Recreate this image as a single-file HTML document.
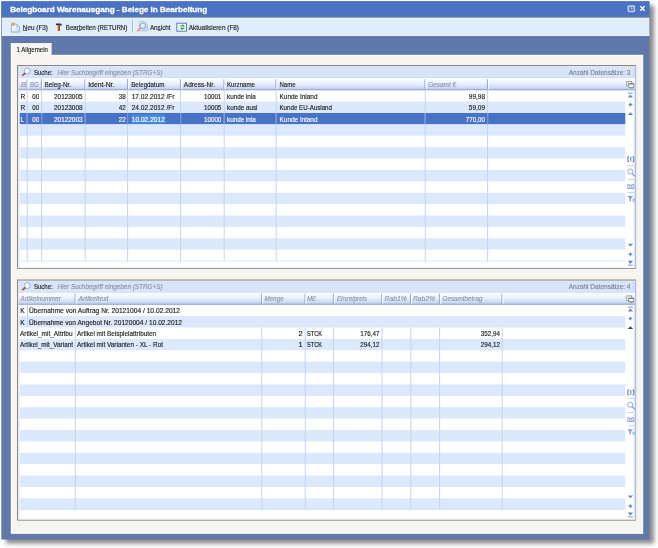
<!DOCTYPE html>
<html><head><meta charset="utf-8"><title>Belegboard Warenausgang</title>
<style>
html,body{margin:0;padding:0;background:#ffffff;}
body{width:658px;height:548px;overflow:hidden;position:relative;font-family:"Liberation Sans", sans-serif;}
</style></head><body>
<svg width="658" height="548" viewBox="0 0 658 548" style="position:absolute;left:0;top:0;will-change:transform">
<defs>
<linearGradient id="hg" x1="0" y1="0" x2="0" y2="1">
<stop offset="0" stop-color="#ffffff"/><stop offset="0.4" stop-color="#ecf2fc"/><stop offset="0.75" stop-color="#d2def4"/><stop offset="1" stop-color="#aec3e8"/>
</linearGradient>
<linearGradient id="pg" x1="0" y1="0" x2="1" y2="1"><stop offset="0" stop-color="#ffffff"/><stop offset="1" stop-color="#c8daf4"/></linearGradient>
<filter id="sh" x="-5%" y="-5%" width="112%" height="112%"><feGaussianBlur stdDeviation="2"/></filter>
</defs>
<style>
text{font-family:"Liberation Sans",sans-serif;font-size:7.4px;fill:#1a1a1a;stroke:#1a1a1a;stroke-width:0.15px}
.c{font-size:7.4px}
.hd{font-size:7.4px;fill:#222}
.gi{fill:#8e97a8;stroke:#8e97a8;font-style:italic}
.it{fill:#8b93a3;stroke:#8b93a3;font-style:italic}
.gr{fill:#7b8494;stroke:#7b8494}
.w{fill:#ffffff;stroke:#ffffff}
.tt{font-size:7.6px;font-weight:bold;fill:#ffffff;stroke:#ffffff;stroke-width:0.3px}
.tb{font-size:7.4px;fill:#1c1c1c}
</style>
<rect x="6" y="5.5" width="648" height="538" fill="#2a2a2a" opacity="0.55" filter="url(#sh)"/><rect x="1.3" y="1.3" width="648.1" height="538.2" fill="#6079aa"/><rect x="1.3" y="1.3" width="648.1" height="14.299999999999999" fill="#4a73c5"/><rect x="1.3" y="15.6" width="648.1" height="2.2" fill="#5975ad"/><text x="10.2" y="11.8" class="tt" text-anchor="start"  textLength="197" lengthAdjust="spacingAndGlyphs">Belegboard Warenausgang - Belege in Bearbeitung</text><rect x="627.5" y="5.3" width="7.6" height="7" rx="1.2" fill="#bccbf1"/><rect x="629" y="6.9" width="4.6" height="3.9" fill="#5c7ecb"/><rect x="630.6" y="7.6" width="1.6" height="0.8" fill="#c9d6f4"/><rect x="631.5" y="7.6" width="0.8" height="1.8" fill="#c9d6f4"/><path d="M640.4 6.3 L644.6 10.8 M644.6 6.3 L640.4 10.8" stroke="#ffffff" stroke-width="1.35"/><rect x="2" y="17.8" width="647.4" height="18.400000000000002" fill="#dfedfc"/><rect x="2" y="35.3" width="647.4" height="0.9" fill="#ebf4fe"/><rect x="2" y="36.2" width="647.4" height="0.9" fill="#5872a6"/><rect x="2" y="17.8" width="647.4" height="1" fill="#eef5fe"/><path d="M11.4 24 h5.2 l2.8 2.8 v5.3 h-8 z" fill="url(#pg)" stroke="#8fa4c8" stroke-width="0.8"/><path d="M16.6 24 v2.8 h2.8" fill="none" stroke="#9fb2d2" stroke-width="0.6"/><circle cx="13.1" cy="24.3" r="1.7" fill="#ee8f2c"/><circle cx="13.1" cy="24.3" r="0.7" fill="#fbd089"/><text x="22.8" y="29.8" class="tb" text-anchor="start"  textLength="25.2" lengthAdjust="spacingAndGlyphs">Neu (F3)</text><rect x="22.8" y="30.3" width="4.6" height="0.6" fill="#1c1c1c"/><path d="M57.7 25.4 h2.3 v5.6 h-2.3 z" fill="#d4641c"/><path d="M58.9 25.4 h1.1 v5.6 h-1.1 z" fill="#a8440e"/><path d="M55.9 23.6 h4.6 q1.4 0.3 1.4 2.2 h-1.1 q-0.1 -0.7 -0.8 -0.6 h-4.1 z" fill="#3b2a24"/><text x="65.8" y="29.8" class="tb" text-anchor="start"  textLength="61.6" lengthAdjust="spacingAndGlyphs">Bearbeiten (RETURN)</text><rect x="77.4" y="30.3" width="3.4" height="0.6" fill="#1c1c1c"/><rect x="132.1" y="19.8" width="0.9" height="12.6" fill="#a3b1cc"/><rect x="133" y="19.8" width="0.8" height="12.6" fill="#f4f9ff"/><path d="M139.4 21.6 h5.4 l2.8 2.8 v6.4 h-8.2 z" fill="url(#pg)" stroke="#9fb1d2" stroke-width="0.7"/><circle cx="142.9" cy="26" r="3" fill="#c9dcf4" stroke="#8c9cba" stroke-width="0.9"/><circle cx="142.4" cy="25.4" r="1.3" fill="#eaf2fd"/><path d="M140.6 28.2 L137.6 31" stroke="#dc9a84" stroke-width="1.6" stroke-linecap="round"/><text x="149.9" y="29.8" class="tb" text-anchor="start"  textLength="20.7" lengthAdjust="spacingAndGlyphs">Ansicht</text><rect x="157.8" y="30.3" width="3.2" height="0.6" fill="#1c1c1c"/><rect x="176.8" y="23.2" width="9.6" height="8" fill="#fbfdfb" stroke="#4d6db2" stroke-width="0.9"/><rect x="177.6" y="25" width="2.2" height="0.7" fill="#b9cdee"/><rect x="177.6" y="27" width="2.2" height="0.7" fill="#b9cdee"/><rect x="177.6" y="29" width="2.2" height="0.7" fill="#b9cdee"/><path d="M180.4 26 h3.2 l-1.3 -1.3 M184.4 28.4 h-3.2 l1.3 1.3" stroke="#1fa02e" stroke-width="1.2" fill="none"/><text x="188.8" y="29.8" class="tb" text-anchor="start"  textLength="50.2" lengthAdjust="spacingAndGlyphs">Aktualisieren (F8)</text><rect x="10.9" y="43.3" width="40.7" height="12.5" fill="#f8f7f2"/><rect x="10.9" y="43.3" width="40.7" height="0.9" fill="#ffffff"/><rect x="10.9" y="54.9" width="632.2" height="478.7" fill="#f6f5ef"/><rect x="10.9" y="43.3" width="1" height="490.3" fill="#ffffff"/><rect x="51.6" y="54.9" width="591.5" height="0.9" fill="#ffffff"/><rect x="642.1" y="54.9" width="1" height="478.7" fill="#fdfdfb"/><rect x="10.9" y="532.6" width="632.2" height="1" fill="#fdfdfb"/><text x="16.5" y="51.8" class="tb" text-anchor="start"  textLength="31.4" lengthAdjust="spacingAndGlyphs">1 Allgemein</text><rect x="17.5" y="65.5" width="618.5" height="202.89999999999998" fill="#ffffff"/>
<rect x="18.5" y="66.5" width="616.5" height="11.700000000000003" fill="#d8e4f8"/>
<rect x="18.5" y="77.60000000000001" width="616.5" height="0.8" fill="#c5d4ee"/>
<rect x="18.5" y="78.2" width="616.5" height="12.0" fill="url(#hg)"/>
<rect x="18.5" y="89.3" width="616.5" height="0.9" fill="#8ea9dd"/>
<rect x="19.5" y="101.59" width="605.8" height="11.39" fill="#dce9fc"/>
<rect x="19.5" y="112.98" width="605.8" height="11.39" fill="#4872c6"/>
<rect x="19.5" y="124.37" width="605.8" height="11.39" fill="#dce9fc"/>
<rect x="19.5" y="147.15" width="605.8" height="11.39" fill="#dce9fc"/>
<rect x="19.5" y="169.93" width="605.8" height="11.39" fill="#dce9fc"/>
<rect x="19.5" y="192.71" width="605.8" height="11.39" fill="#dce9fc"/>
<rect x="19.5" y="215.49" width="605.8" height="11.39" fill="#dce9fc"/>
<rect x="19.5" y="238.27" width="605.8" height="11.39" fill="#dce9fc"/>
<rect x="19.5" y="260.65" width="605.8" height="0.8" fill="#d3e0f6"/>
<rect x="633.8" y="90.2" width="1" height="177.2" fill="#cfdcf5"/>
<rect x="18.7" y="90.2" width="0.8" height="177.2" fill="#e4ecfa"/>
<rect x="26.70" y="90.20" width="1" height="170.85" fill="#c3d4f2"/>
<rect x="41.10" y="90.20" width="1" height="170.85" fill="#c3d4f2"/>
<rect x="84.70" y="90.20" width="1" height="170.85" fill="#c3d4f2"/>
<rect x="127.10" y="90.20" width="1" height="170.85" fill="#c3d4f2"/>
<rect x="180.10" y="90.20" width="1" height="170.85" fill="#c3d4f2"/>
<rect x="223.70" y="90.20" width="1" height="170.85" fill="#c3d4f2"/>
<rect x="275.70" y="90.20" width="1" height="170.85" fill="#c3d4f2"/>
<rect x="424.70" y="90.20" width="1" height="170.85" fill="#c3d4f2"/>
<rect x="487.10" y="90.20" width="1" height="170.85" fill="#c3d4f2"/>
<rect x="26.70" y="112.98" width="1" height="11.39" fill="#6b8fd8"/>
<rect x="41.10" y="112.98" width="1" height="11.39" fill="#6b8fd8"/>
<rect x="84.70" y="112.98" width="1" height="11.39" fill="#6b8fd8"/>
<rect x="127.10" y="112.98" width="1" height="11.39" fill="#6b8fd8"/>
<rect x="180.10" y="112.98" width="1" height="11.39" fill="#6b8fd8"/>
<rect x="223.70" y="112.98" width="1" height="11.39" fill="#6b8fd8"/>
<rect x="275.70" y="112.98" width="1" height="11.39" fill="#6b8fd8"/>
<rect x="424.70" y="112.98" width="1" height="11.39" fill="#6b8fd8"/>
<rect x="487.10" y="112.98" width="1" height="11.39" fill="#6b8fd8"/>
<rect x="26.50" y="79.20" width="1" height="10.00" fill="#8da0c4"/>
<rect x="27.50" y="79.20" width="1" height="10.00" fill="#ffffff"/>
<rect x="40.90" y="79.20" width="1" height="10.00" fill="#8da0c4"/>
<rect x="41.90" y="79.20" width="1" height="10.00" fill="#ffffff"/>
<rect x="84.50" y="79.20" width="1" height="10.00" fill="#8da0c4"/>
<rect x="85.50" y="79.20" width="1" height="10.00" fill="#ffffff"/>
<rect x="126.90" y="79.20" width="1" height="10.00" fill="#8da0c4"/>
<rect x="127.90" y="79.20" width="1" height="10.00" fill="#ffffff"/>
<rect x="179.90" y="79.20" width="1" height="10.00" fill="#8da0c4"/>
<rect x="180.90" y="79.20" width="1" height="10.00" fill="#ffffff"/>
<rect x="223.50" y="79.20" width="1" height="10.00" fill="#8da0c4"/>
<rect x="224.50" y="79.20" width="1" height="10.00" fill="#ffffff"/>
<rect x="275.50" y="79.20" width="1" height="10.00" fill="#8da0c4"/>
<rect x="276.50" y="79.20" width="1" height="10.00" fill="#ffffff"/>
<rect x="424.50" y="79.20" width="1" height="10.00" fill="#8da0c4"/>
<rect x="425.50" y="79.20" width="1" height="10.00" fill="#ffffff"/>
<rect x="486.90" y="79.20" width="1" height="10.00" fill="#8da0c4"/>
<rect x="487.90" y="79.20" width="1" height="10.00" fill="#ffffff"/>
<text x="21" y="86.60000000000001" class="hd gi" text-anchor="start" >B</text>
<text x="30" y="86.60000000000001" class="hd gi" text-anchor="start"  textLength="8.6" lengthAdjust="spacingAndGlyphs">BG</text>
<text x="44.6" y="86.60000000000001" class="hd" text-anchor="start"  textLength="26.5" lengthAdjust="spacingAndGlyphs">Beleg-Nr.</text>
<text x="88.2" y="86.60000000000001" class="hd" text-anchor="start"  textLength="26.2" lengthAdjust="spacingAndGlyphs">Ident-Nr.</text>
<text x="131.2" y="86.60000000000001" class="hd" text-anchor="start"  textLength="33.2" lengthAdjust="spacingAndGlyphs">Belegdatum</text>
<text x="183.8" y="86.60000000000001" class="hd" text-anchor="start"  textLength="31.2" lengthAdjust="spacingAndGlyphs">Adress-Nr.</text>
<text x="227" y="86.60000000000001" class="hd" text-anchor="start"  textLength="28" lengthAdjust="spacingAndGlyphs">Kurzname</text>
<text x="279.5" y="86.60000000000001" class="hd" text-anchor="start"  textLength="16" lengthAdjust="spacingAndGlyphs">Name</text>
<text x="428.2" y="86.60000000000001" class="hd gi" text-anchor="start"  textLength="28" lengthAdjust="spacingAndGlyphs">Gesamt €</text>
<text x="20.6" y="98.8" class="c" text-anchor="start"  textLength="4.7" lengthAdjust="spacingAndGlyphs">R</text>
<text x="32.3" y="98.8" class="c" text-anchor="start"  textLength="6.8" lengthAdjust="spacingAndGlyphs">00</text>
<text x="54.0" y="98.8" class="c" text-anchor="start"  textLength="28.6" lengthAdjust="spacingAndGlyphs">20123005</text>
<text x="118.7" y="98.8" class="c" text-anchor="start"  textLength="7" lengthAdjust="spacingAndGlyphs">38</text>
<text x="131.7" y="98.8" class="c" text-anchor="start"  textLength="42.8" lengthAdjust="spacingAndGlyphs">17.02.2012 /Fr</text>
<text x="204.1" y="98.8" class="c" text-anchor="start"  textLength="17.2" lengthAdjust="spacingAndGlyphs">10001</text>
<text x="227" y="98.8" class="c" text-anchor="start"  textLength="28.8" lengthAdjust="spacingAndGlyphs">kunde inla</text>
<text x="279.5" y="98.8" class="c" text-anchor="start"  textLength="38" lengthAdjust="spacingAndGlyphs">Kunde Inland</text>
<text x="468.8" y="98.8" class="c" text-anchor="start"  textLength="16.2" lengthAdjust="spacingAndGlyphs">99,98</text>
<text x="20.6" y="110.19" class="c" text-anchor="start"  textLength="4.7" lengthAdjust="spacingAndGlyphs">R</text>
<text x="32.3" y="110.19" class="c" text-anchor="start"  textLength="6.8" lengthAdjust="spacingAndGlyphs">00</text>
<text x="54.0" y="110.19" class="c" text-anchor="start"  textLength="28.6" lengthAdjust="spacingAndGlyphs">20123008</text>
<text x="118.7" y="110.19" class="c" text-anchor="start"  textLength="7" lengthAdjust="spacingAndGlyphs">42</text>
<text x="131.7" y="110.19" class="c" text-anchor="start"  textLength="42.8" lengthAdjust="spacingAndGlyphs">24.02.2012 /Fr</text>
<text x="204.1" y="110.19" class="c" text-anchor="start"  textLength="17.2" lengthAdjust="spacingAndGlyphs">10005</text>
<text x="227" y="110.19" class="c" text-anchor="start"  textLength="30.5" lengthAdjust="spacingAndGlyphs">kunde ausl</text>
<text x="279.5" y="110.19" class="c" text-anchor="start"  textLength="52.5" lengthAdjust="spacingAndGlyphs">Kunde EU-Ausland</text>
<text x="468.8" y="110.19" class="c" text-anchor="start"  textLength="16.2" lengthAdjust="spacingAndGlyphs">59,09</text>
<rect x="131.2" y="114.48" width="34.2" height="8.99" fill="#4a8bdc"/>
<text x="20.6" y="121.58" class="c w" text-anchor="start"  textLength="3.6" lengthAdjust="spacingAndGlyphs">L</text>
<text x="32.3" y="121.58" class="c w" text-anchor="start"  textLength="6.8" lengthAdjust="spacingAndGlyphs">00</text>
<text x="54.0" y="121.58" class="c w" text-anchor="start"  textLength="28.6" lengthAdjust="spacingAndGlyphs">20122003</text>
<text x="118.7" y="121.58" class="c w" text-anchor="start"  textLength="7" lengthAdjust="spacingAndGlyphs">22</text>
<text x="131.7" y="121.58" class="c w" text-anchor="start"  textLength="33.2" lengthAdjust="spacingAndGlyphs">10.02.2012</text>
<text x="204.1" y="121.58" class="c w" text-anchor="start"  textLength="17.2" lengthAdjust="spacingAndGlyphs">10000</text>
<text x="227" y="121.58" class="c w" text-anchor="start"  textLength="28.8" lengthAdjust="spacingAndGlyphs">kunde inla</text>
<text x="279.5" y="121.58" class="c w" text-anchor="start"  textLength="38" lengthAdjust="spacingAndGlyphs">Kunde Inland</text>
<text x="465.7" y="121.58" class="c w" text-anchor="start"  textLength="19.3" lengthAdjust="spacingAndGlyphs">770,00</text>
<circle cx="27.3" cy="71.1" r="3" fill="#eaf2fd" stroke="#9aa9c6" stroke-width="0.9"/><circle cx="26.900000000000002" cy="70.6" r="1.5" fill="#ffffff"/><path d="M24.900000000000002 73.5 L22.700000000000003 75.19999999999999" stroke="#a8503a" stroke-width="1.6" stroke-linecap="round"/>
<text x="34" y="74.8" class="c" text-anchor="start"  textLength="18.7" lengthAdjust="spacingAndGlyphs">Suche:</text>
<text x="57.5" y="74.8" class="c it" text-anchor="start"  textLength="105" lengthAdjust="spacingAndGlyphs">Hier Suchbegriff eingeben (STRG+S)</text>
<text x="568.7" y="74.8" class="c gr" text-anchor="start"  textLength="61.8" lengthAdjust="spacingAndGlyphs">Anzahl Datensätze: 3</text>
<rect x="633.6" y="67.5" width="0.8" height="9.700000000000003" fill="#c3d1ec"/>
<rect x="626.8" y="81.4" width="5" height="4.5" fill="#f2f2ee" stroke="#808080" stroke-width="0.7"/><rect x="628.8" y="83.60000000000001" width="5" height="3.6" fill="#ffffff" stroke="#707070" stroke-width="0.7"/><rect x="628.8" y="83.60000000000001" width="5" height="0.9" fill="#707070"/><rect x="630.0999999999999" y="87.60000000000001" width="2.4" height="0.7" fill="#808080"/>
<rect x="628.0" y="92.7" width="4.8" height="0.9" fill="#6686cc"/>
<path d="M630.4 94.4 L633.0 97.5 L627.8 97.5 Z" fill="#6686cc"/>
<path d="M630.4 102.4 L631.3 103.80000000000001 L632.8 104.60000000000001 L631.3 105.4 L630.4 106.80000000000001 L629.5 105.4 L628.0 104.60000000000001 L629.5 103.80000000000001 Z" fill="#6686cc"/>
<path d="M630.4 112.3 L633.1 115.1 L627.6999999999999 115.1 Z" fill="#6686cc"/>
<path d="M627.6999999999999 243.7 L633.1 243.7 L630.4 246.5 Z" fill="#6686cc"/>
<path d="M630.4 252.09999999999997 L631.3 253.49999999999997 L632.8 254.29999999999995 L631.3 255.09999999999997 L630.4 256.49999999999994 L629.5 255.09999999999997 L628.0 254.29999999999995 L629.5 253.49999999999997 Z" fill="#6686cc"/>
<path d="M627.8 260.79999999999995 L633.0 260.79999999999995 L630.4 263.9 Z" fill="#6686cc"/>
<rect x="628.0" y="264.69999999999993" width="4.8" height="0.9" fill="#6686cc"/>
<path d="M629.0999999999999 156.74999999999997 h-1.2 v4.9 h1.2 M632.5 156.74999999999997 h1.2 v4.9 h-1.2 M630.8 156.74999999999997 v4.9" stroke="#3f5fa0" stroke-width="0.85" fill="none"/>
<rect x="627.5999999999999" y="165.04999999999998" width="6.4" height="0.8" fill="#b9c8e6"/>
<circle cx="630.1999999999999" cy="171.54999999999998" r="2.6" stroke="#8c9bb8" stroke-width="0.8" fill="#f4f8ff"/>
<path d="M632.1999999999999 173.64999999999998 L634.8 176.24999999999997" stroke="#7d97d6" stroke-width="1.3"/>
<rect x="627.5999999999999" y="178.95" width="6.4" height="0.8" fill="#b9c8e6"/>
<path d="M627.8 188.04999999999998 V184.54999999999998 H629.8 V188.04999999999998 M631.8 188.04999999999998 V184.54999999999998 H633.8 V188.04999999999998 M629.8 185.64999999999998 H631.8" stroke="#7f95c6" stroke-width="0.8" fill="none"/>
<rect x="627.4" y="188.04999999999998" width="6.8" height="0.8" fill="#7f95c6"/>
<rect x="627.5999999999999" y="192.24999999999997" width="6.4" height="0.8" fill="#b9c8e6"/>
<path d="M627.4 196.04999999999998 H633.0 L631.0 198.64999999999998 V201.64999999999998 L629.4 200.64999999999998 V198.64999999999998 Z" fill="#8fa2c8"/>
<rect x="632.5999999999999" y="198.45" width="2.4" height="3.2" fill="#a9bbe2"/>
<rect x="17.5" y="65.0" width="618.5" height="1.1" fill="#85878c"/>
<rect x="17.0" y="65.0" width="1.1" height="203.39999999999998" fill="#85878c"/>
<rect x="17.5" y="267.9" width="618.5" height="1" fill="#8d9096"/>
<rect x="635.2" y="65.5" width="1" height="202.89999999999998" fill="#9fb2dc"/><rect x="17.5" y="280.0" width="618.5" height="240.20000000000005" fill="#ffffff"/>
<rect x="18.5" y="281.0" width="616.5" height="11.699999999999989" fill="#d8e4f8"/>
<rect x="18.5" y="292.09999999999997" width="616.5" height="0.8" fill="#c5d4ee"/>
<rect x="18.5" y="292.7" width="616.5" height="12.0" fill="url(#hg)"/>
<rect x="18.5" y="303.8" width="616.5" height="0.9" fill="#8ea9dd"/>
<rect x="19.5" y="316.09" width="605.8" height="11.39" fill="#dce9fc"/>
<rect x="19.5" y="338.87" width="605.8" height="11.39" fill="#dce9fc"/>
<rect x="19.5" y="361.65" width="605.8" height="11.39" fill="#dce9fc"/>
<rect x="19.5" y="384.43" width="605.8" height="11.39" fill="#dce9fc"/>
<rect x="19.5" y="407.21" width="605.8" height="11.39" fill="#dce9fc"/>
<rect x="19.5" y="429.99" width="605.8" height="11.39" fill="#dce9fc"/>
<rect x="19.5" y="452.77" width="605.8" height="11.39" fill="#dce9fc"/>
<rect x="19.5" y="475.55" width="605.8" height="11.39" fill="#dce9fc"/>
<rect x="19.5" y="498.33" width="605.8" height="11.39" fill="#dce9fc"/>
<rect x="19.5" y="509.32" width="605.8" height="0.8" fill="#d3e0f6"/>
<rect x="633.8" y="304.7" width="1" height="214.50000000000006" fill="#cfdcf5"/>
<rect x="18.7" y="304.7" width="0.8" height="214.50000000000006" fill="#e4ecfa"/>
<rect x="74.80" y="327.48" width="1" height="182.24" fill="#c3d4f2"/>
<rect x="261.30" y="327.48" width="1" height="182.24" fill="#c3d4f2"/>
<rect x="304.70" y="327.48" width="1" height="182.24" fill="#c3d4f2"/>
<rect x="333.10" y="327.48" width="1" height="182.24" fill="#c3d4f2"/>
<rect x="381.50" y="327.48" width="1" height="182.24" fill="#c3d4f2"/>
<rect x="410.30" y="327.48" width="1" height="182.24" fill="#c3d4f2"/>
<rect x="439.10" y="327.48" width="1" height="182.24" fill="#c3d4f2"/>
<rect x="501.70" y="327.48" width="1" height="182.24" fill="#c3d4f2"/>
<rect x="27.00" y="304.70" width="1" height="22.78" fill="#c3d4f2"/>
<rect x="74.60" y="293.70" width="1" height="10.00" fill="#8da0c4"/>
<rect x="75.60" y="293.70" width="1" height="10.00" fill="#ffffff"/>
<rect x="261.10" y="293.70" width="1" height="10.00" fill="#8da0c4"/>
<rect x="262.10" y="293.70" width="1" height="10.00" fill="#ffffff"/>
<rect x="304.50" y="293.70" width="1" height="10.00" fill="#8da0c4"/>
<rect x="305.50" y="293.70" width="1" height="10.00" fill="#ffffff"/>
<rect x="332.90" y="293.70" width="1" height="10.00" fill="#8da0c4"/>
<rect x="333.90" y="293.70" width="1" height="10.00" fill="#ffffff"/>
<rect x="381.30" y="293.70" width="1" height="10.00" fill="#8da0c4"/>
<rect x="382.30" y="293.70" width="1" height="10.00" fill="#ffffff"/>
<rect x="410.10" y="293.70" width="1" height="10.00" fill="#8da0c4"/>
<rect x="411.10" y="293.70" width="1" height="10.00" fill="#ffffff"/>
<rect x="438.90" y="293.70" width="1" height="10.00" fill="#8da0c4"/>
<rect x="439.90" y="293.70" width="1" height="10.00" fill="#ffffff"/>
<rect x="501.50" y="293.70" width="1" height="10.00" fill="#8da0c4"/>
<rect x="502.50" y="293.70" width="1" height="10.00" fill="#ffffff"/>
<text x="20.6" y="301.09999999999997" class="hd gi" text-anchor="start"  textLength="40.3" lengthAdjust="spacingAndGlyphs">Artikelnummer</text>
<text x="78.5" y="301.09999999999997" class="hd gi" text-anchor="start"  textLength="30" lengthAdjust="spacingAndGlyphs">Artikeltext</text>
<text x="264.5" y="301.09999999999997" class="hd gi" text-anchor="start"  textLength="19.2" lengthAdjust="spacingAndGlyphs">Menge</text>
<text x="307" y="301.09999999999997" class="hd gi" text-anchor="start"  textLength="9.2" lengthAdjust="spacingAndGlyphs">ME</text>
<text x="337" y="301.09999999999997" class="hd gi" text-anchor="start"  textLength="30" lengthAdjust="spacingAndGlyphs">Einzelpreis</text>
<text x="384.5" y="301.09999999999997" class="hd gi" text-anchor="start"  textLength="22.2" lengthAdjust="spacingAndGlyphs">Rab1%</text>
<text x="413" y="301.09999999999997" class="hd gi" text-anchor="start"  textLength="22" lengthAdjust="spacingAndGlyphs">Rab2%</text>
<text x="442.5" y="301.09999999999997" class="hd gi" text-anchor="start"  textLength="40" lengthAdjust="spacingAndGlyphs">Gesamtbetrag</text>
<text x="20.2" y="313.3" class="c" text-anchor="start"  textLength="4.4" lengthAdjust="spacingAndGlyphs">K</text>
<text x="29" y="313.3" class="c" text-anchor="start"  textLength="151" lengthAdjust="spacingAndGlyphs">Übernahme von Auftrag Nr. 20121004 / 10.02.2012</text>
<text x="20.2" y="324.69" class="c" text-anchor="start"  textLength="4.4" lengthAdjust="spacingAndGlyphs">K</text>
<text x="29" y="324.69" class="c" text-anchor="start"  textLength="153" lengthAdjust="spacingAndGlyphs">Übernahme von Angebot Nr. 20120004 / 10.02.2012</text>
<text x="20" y="336.08000000000004" class="c" text-anchor="start"  textLength="52.5" lengthAdjust="spacingAndGlyphs">Artikel_mit_Attribu</text>
<text x="77" y="336.08000000000004" class="c" text-anchor="start"  textLength="79.2" lengthAdjust="spacingAndGlyphs">Artikel mit Beispielattributen</text>
<text x="302.6" y="336.08000000000004" class="c" text-anchor="end" >2</text>
<text x="307" y="336.08000000000004" class="c" text-anchor="start"  textLength="15" lengthAdjust="spacingAndGlyphs">STCK</text>
<text x="360.3" y="336.08000000000004" class="c" text-anchor="start"  textLength="19.2" lengthAdjust="spacingAndGlyphs">176,47</text>
<text x="480.8" y="336.08000000000004" class="c" text-anchor="start"  textLength="19.2" lengthAdjust="spacingAndGlyphs">352,94</text>
<text x="20" y="347.47" class="c" text-anchor="start"  textLength="53" lengthAdjust="spacingAndGlyphs">Artikel_mit_Variant</text>
<text x="77" y="347.47" class="c" text-anchor="start"  textLength="86" lengthAdjust="spacingAndGlyphs">Artikel mit Varianten - XL - Rot</text>
<text x="302.6" y="347.47" class="c" text-anchor="end" >1</text>
<text x="307" y="347.47" class="c" text-anchor="start"  textLength="15" lengthAdjust="spacingAndGlyphs">STCK</text>
<text x="360.3" y="347.47" class="c" text-anchor="start"  textLength="19.2" lengthAdjust="spacingAndGlyphs">294,12</text>
<text x="480.8" y="347.47" class="c" text-anchor="start"  textLength="19.2" lengthAdjust="spacingAndGlyphs">294,12</text>
<circle cx="27.3" cy="285.6" r="3" fill="#eaf2fd" stroke="#9aa9c6" stroke-width="0.9"/><circle cx="26.900000000000002" cy="285.1" r="1.5" fill="#ffffff"/><path d="M24.900000000000002 288.0 L22.700000000000003 289.70000000000005" stroke="#a8503a" stroke-width="1.6" stroke-linecap="round"/>
<text x="34" y="289.3" class="c" text-anchor="start"  textLength="18.7" lengthAdjust="spacingAndGlyphs">Suche:</text>
<text x="57.5" y="289.3" class="c it" text-anchor="start"  textLength="105" lengthAdjust="spacingAndGlyphs">Hier Suchbegriff eingeben (STRG+S)</text>
<text x="568.7" y="289.3" class="c gr" text-anchor="start"  textLength="61.8" lengthAdjust="spacingAndGlyphs">Anzahl Datensätze: 4</text>
<rect x="633.6" y="282.0" width="0.8" height="9.699999999999989" fill="#c3d1ec"/>
<rect x="626.8" y="295.9" width="5" height="4.5" fill="#f2f2ee" stroke="#808080" stroke-width="0.7"/><rect x="628.8" y="298.09999999999997" width="5" height="3.6" fill="#ffffff" stroke="#707070" stroke-width="0.7"/><rect x="628.8" y="298.09999999999997" width="5" height="0.9" fill="#707070"/><rect x="630.0999999999999" y="302.09999999999997" width="2.4" height="0.7" fill="#808080"/>
<rect x="628.0" y="306.59999999999997" width="4.8" height="0.9" fill="#6686cc"/>
<path d="M630.4 308.29999999999995 L633.0 311.4 L627.8 311.4 Z" fill="#6686cc"/>
<path d="M630.4 316.29999999999995 L631.3 317.69999999999993 L632.8 318.49999999999994 L631.3 319.29999999999995 L630.4 320.69999999999993 L629.5 319.29999999999995 L628.0 318.49999999999994 L629.5 317.69999999999993 Z" fill="#6686cc"/>
<path d="M630.4 326.2 L633.1 329.0 L627.6999999999999 329.0 Z" fill="#3a3f4c"/>
<path d="M627.6999999999999 495.50000000000006 L633.1 495.50000000000006 L630.4 498.30000000000007 Z" fill="#6686cc"/>
<path d="M630.4 503.90000000000003 L631.3 505.3 L632.8 506.1 L631.3 506.90000000000003 L630.4 508.3 L629.5 506.90000000000003 L628.0 506.1 L629.5 505.3 Z" fill="#6686cc"/>
<path d="M627.8 512.6 L633.0 512.6 L630.4 515.7 Z" fill="#6686cc"/>
<rect x="628.0" y="516.5" width="4.8" height="0.9" fill="#6686cc"/>
<path d="M629.0999999999999 389.90000000000003 h-1.2 v4.9 h1.2 M632.5 389.90000000000003 h1.2 v4.9 h-1.2 M630.8 389.90000000000003 v4.9" stroke="#3f5fa0" stroke-width="0.85" fill="none"/>
<rect x="627.5999999999999" y="398.20000000000005" width="6.4" height="0.8" fill="#b9c8e6"/>
<circle cx="630.1999999999999" cy="404.70000000000005" r="2.6" stroke="#8c9bb8" stroke-width="0.8" fill="#f4f8ff"/>
<path d="M632.1999999999999 406.80000000000007 L634.8 409.4000000000001" stroke="#7d97d6" stroke-width="1.3"/>
<rect x="627.5999999999999" y="412.1" width="6.4" height="0.8" fill="#b9c8e6"/>
<path d="M627.8 421.20000000000005 V417.70000000000005 H629.8 V421.20000000000005 M631.8 421.20000000000005 V417.70000000000005 H633.8 V421.20000000000005 M629.8 418.80000000000007 H631.8" stroke="#7f95c6" stroke-width="0.8" fill="none"/>
<rect x="627.4" y="421.20000000000005" width="6.8" height="0.8" fill="#7f95c6"/>
<rect x="627.5999999999999" y="425.40000000000003" width="6.4" height="0.8" fill="#b9c8e6"/>
<path d="M627.4 429.20000000000005 H633.0 L631.0 431.80000000000007 V434.80000000000007 L629.4 433.80000000000007 V431.80000000000007 Z" fill="#8fa2c8"/>
<rect x="632.5999999999999" y="431.6" width="2.4" height="3.2" fill="#a9bbe2"/>
<rect x="17.5" y="279.5" width="618.5" height="1.1" fill="#85878c"/>
<rect x="17.0" y="279.5" width="1.1" height="240.70000000000005" fill="#85878c"/>
<rect x="17.5" y="519.7" width="618.5" height="1" fill="#8d9096"/>
<rect x="635.2" y="280.0" width="1" height="240.20000000000005" fill="#9fb2dc"/></svg>
</body></html>
